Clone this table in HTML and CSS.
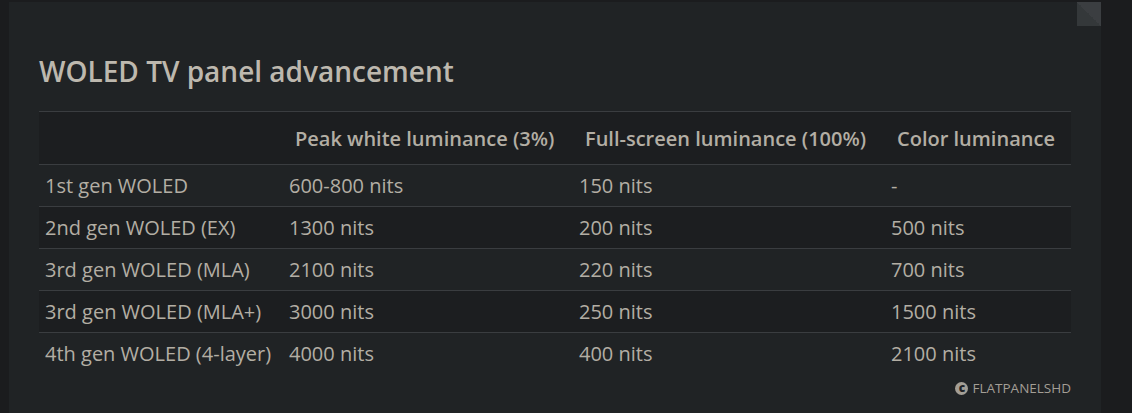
FILE: index.html
```html
<!DOCTYPE html>
<html>
<head>
<meta charset="utf-8">
<link rel="stylesheet" href="styles.css">
</head>
<body>
<div class="page">
  <div class="card">
    <div class="corner"></div>
    <h2 class="title">WOLED TV panel advancement</h2>
    <table class="spec">
      <colgroup>
        <col class="c1"><col class="c2"><col class="c3"><col class="c4">
      </colgroup>
      <thead>
        <tr><th></th><th>Peak white luminance (3%)</th><th>Full-screen luminance (100%)</th><th>Color luminance</th></tr>
      </thead>
      <tbody>
        <tr><td>1st gen WOLED</td><td>600-800 nits</td><td>150 nits</td><td>-</td></tr>
        <tr class="alt"><td>2nd gen WOLED (EX)</td><td>1300 nits</td><td>200 nits</td><td>500 nits</td></tr>
        <tr><td>3rd gen WOLED (MLA)</td><td>2100 nits</td><td>220 nits</td><td>700 nits</td></tr>
        <tr class="alt"><td>3rd gen WOLED (MLA+)</td><td>3000 nits</td><td>250 nits</td><td>1500 nits</td></tr>
        <tr><td>4th gen WOLED (4-layer)</td><td>4000 nits</td><td>400 nits</td><td>2100 nits</td></tr>
      </tbody>
    </table>
    <div class="credit"><span class="copy">c</span>FLATPANELSHD</div>
  </div>
  <div class="side"></div>
</div>
</body>
</html>
```
FILE: styles.css
```css
html, body {
  margin: 0;
  padding: 0;
  background: #1b1c1e;
  height: 100%;
  overflow: hidden;
}
.page {
  display: flex;
  padding: 2px 0 0 9px;
  height: 411px;
  font-family: "Open Sans", "Noto Sans", sans-serif;
}
.card {
  position: relative;
  width: 1092px;
  background: #202325;
  padding: 0 30px;
  box-sizing: border-box;
}
.side {
  flex: 1;
}
.corner {
  position: absolute;
  top: 0;
  right: 0;
  width: 24px;
  height: 24px;
  background: linear-gradient(45deg, #34383a 50%, #3b3e41 50%);
}
.title {
  margin: 0;
  padding-top: 50px;
  height: 59px;
  box-sizing: content-box;
  font-size: 28px;
  font-weight: 600;
  line-height: 38px;
  color: #bdb8ae;
}
.spec {
  width: 1032px;
  border-collapse: collapse;
  table-layout: fixed;
  color: #b3aea4;
  font-size: 20px;
}
.c1 { width: 244px; }
.c2 { width: 290px; }
.c3 { width: 312px; }
.c4 { width: 186px; }
.spec th {
  text-align: left;
  font-weight: 600;
  padding: 0 0 0 12px;
  height: 52px;
  white-space: nowrap;
}
.spec thead tr {
  background: #1c1e20;
  border-top: 1px solid #3a3d40;
}
.spec td {
  padding: 0 0 0 6px;
  height: 41px;
  white-space: nowrap;
}
.spec tbody tr {
  border-top: 1px solid #3a3d40;
}
.spec tbody tr.alt {
  background: #1c1e20;
}
.credit {
  display: flex;
  justify-content: flex-end;
  align-items: center;
  gap: 4px;
  margin-top: 5px;
  font-size: 13.5px;
  color: #a39e95;
}
.copy {
  display: inline-flex;
  align-items: center;
  justify-content: center;
  width: 13px;
  height: 13px;
  border-radius: 50%;
  background: #a39e95;
  color: #202325;
  font-size: 12px;
  font-weight: 800;
  line-height: 1;
}
```
